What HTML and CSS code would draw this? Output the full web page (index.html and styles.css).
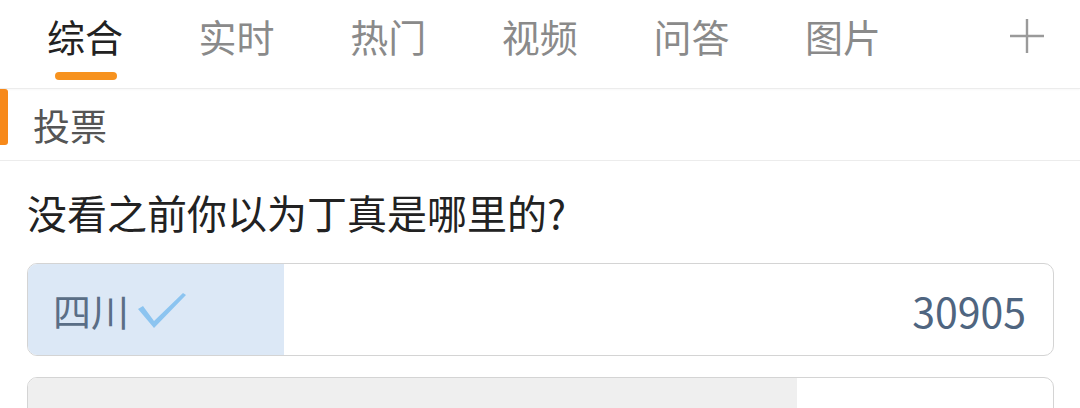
FILE: index.html
```html
<!DOCTYPE html>
<html lang="zh-CN">
<head>
    <meta charset="UTF-8">
    <meta name="viewport" content="width=device-width, initial-scale=1.0">
    <title>投票</title>
    <link rel="stylesheet" href="styles.css">
</head>
<body>
    <div class="tab-bar">
        <div class="tabs">
            <div class="tab active">综合<span class="tab-line"></span></div>
            <div class="tab">实时</div>
            <div class="tab">热门</div>
            <div class="tab">视频</div>
            <div class="tab">问答</div>
            <div class="tab">图片</div>
        </div>
        <div class="tab-add">
            <svg width="36" height="36" viewBox="0 0 36 36">
                <path d="M18 1 V35 M1 18 H35" stroke="#9a9a9a" stroke-width="2.4" fill="none"/>
            </svg>
        </div>
    </div>

    <div class="section-title">
        <span class="section-mark"></span>
        <span>投票</span>
    </div>

    <div class="vote">
        <div class="vote-question">没看之前你以为丁真是哪里的?</div>

        <div class="option voted">
            <div class="option-fill" style="width: 25%"></div>
            <div class="option-label">
                四川
                <svg class="check" width="50" height="40" viewBox="0 0 50 40">
                    <path d="M1 18 L17 37 L49 4 L46 2 L17 30 L6 15 Z" fill="#8cc4f0"/>
                </svg>
            </div>
            <div class="option-count">30905</div>
        </div>

        <div class="option">
            <div class="option-fill" style="width: 75%"></div>
            <div class="option-label">西藏</div>
            <div class="option-count">93522</div>
        </div>
    </div>
</body>
</html>
```

FILE: styles.css
```css
body {
    margin: 0;
    padding: 0;
    background-color: #fff;
    font-family: "Noto Sans CJK SC", "Noto Sans", sans-serif;
    overflow: hidden;
}

.tab-bar {
    height: 88px;
    display: flex;
    align-items: center;
    justify-content: space-between;
    border-bottom: 1px solid #ececec;
    box-shadow: 0 1px 2px rgba(0, 0, 0, 0.03);
}

.tabs {
    display: flex;
    gap: 75.6px;
    padding-left: 47px;
    margin-top: -16px;
}

.tab {
    position: relative;
    font-size: 38px;
    line-height: 40px;
    color: #8a8a8a;
}

.tab.active {
    color: #222;
}

.tab-line {
    position: absolute;
    left: 8px;
    top: 56px;
    width: 62px;
    height: 8px;
    border-radius: 4px;
    background-color: #f7921e;
}

.tab-add {
    padding-right: 35px;
    margin-top: -16px;
    display: flex;
}

.section-title {
    height: 71px;
    display: flex;
    align-items: center;
    gap: 25px;
    font-size: 37px;
    color: #555;
    border-bottom: 1px solid #ececec;
}

.section-mark {
    width: 8px;
    height: 56px;
    align-self: flex-start;
    background-color: #f7891a;
    border-radius: 0 3px 3px 0;
}

.vote {
    padding: 25px 26px 0 27px;
}

.vote-question {
    font-size: 40px;
    line-height: 52px;
    color: #222;
    margin-bottom: 25px;
}

.option {
    position: relative;
    height: 91px;
    border: 1px solid #d4d4d4;
    border-radius: 10px;
    overflow: hidden;
    display: flex;
    align-items: center;
    justify-content: space-between;
    margin-bottom: 21px;
}

.option-fill {
    position: absolute;
    left: 0;
    top: 0;
    bottom: 0;
    background-color: #efefef;
}

.option.voted .option-fill {
    background-color: #dce8f6;
}

.option-label {
    position: relative;
    display: flex;
    align-items: center;
    gap: 8px;
    padding-left: 25px;
    font-size: 38px;
    color: #333;
}

.option.voted .option-label {
    color: #5a6e86;
}

.check {
    margin-top: 2px;
}

.option-count {
    position: relative;
    padding-right: 27px;
    font-size: 41px;
    color: #4f6580;
}
```
